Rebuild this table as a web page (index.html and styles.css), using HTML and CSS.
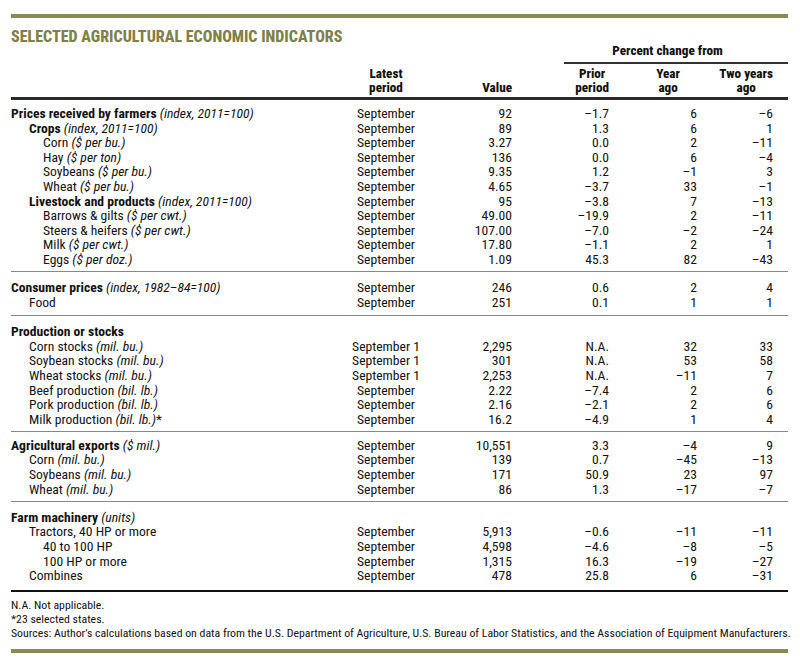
FILE: index.html
```html
<!DOCTYPE html>
<html>
<head>
<meta charset="utf-8">
<link rel="stylesheet" href="styles.css">
</head>
<body>
<div class="page">
  <div class="rule-olive"></div>
  <h1 class="title">SELECTED AGRICULTURAL ECONOMIC INDICATORS</h1>
  <table class="ind">
    <colgroup>
      <col class="w-label"><col class="w-period"><col class="w-value"><col class="w-prior"><col class="w-year"><col class="w-two">
    </colgroup>
    <thead>
      <tr class="hr1">
        <th colspan="3"></th>
        <th colspan="3" class="pcf">Percent change from</th>
      </tr>
      <tr class="hr2">
        <th></th>
        <th class="h-period">Latest<br>period</th>
        <th class="h-value">Value</th>
        <th class="h-prior"><span class="hb">Prior<br>period</span></th>
        <th class="h-year"><span class="hb">Year<br>ago</span></th>
        <th class="h-two"><span class="hb">Two years<br>ago</span></th>
      </tr>
    </thead>
    <tbody class="sec first">
      <tr><td class="l0"><b>Prices received by farmers</b> <i>(index, 2011=100)</i></td><td>September</td><td>92</td><td>–1.7</td><td>6</td><td>–6</td></tr>
      <tr><td class="l1"><b>Crops</b> <i>(index, 2011=100)</i></td><td>September</td><td>89</td><td>1.3</td><td>6</td><td>1</td></tr>
      <tr><td class="l2">Corn <i>($ per bu.)</i></td><td>September</td><td>3.27</td><td>0.0</td><td>2</td><td>–11</td></tr>
      <tr><td class="l2">Hay <i>($ per ton)</i></td><td>September</td><td>136</td><td>0.0</td><td>6</td><td>–4</td></tr>
      <tr><td class="l2">Soybeans <i>($ per bu.)</i></td><td>September</td><td>9.35</td><td>1.2</td><td>–1</td><td>3</td></tr>
      <tr><td class="l2">Wheat <i>($ per bu.)</i></td><td>September</td><td>4.65</td><td>–3.7</td><td>33</td><td>–1</td></tr>
      <tr><td class="l1"><b>Livestock and products</b> <i>(index, 2011=100)</i></td><td>September</td><td>95</td><td>–3.8</td><td>7</td><td>–13</td></tr>
      <tr><td class="l2">Barrows &amp; gilts <i>($ per cwt.)</i></td><td>September</td><td>49.00</td><td>–19.9</td><td>2</td><td>–11</td></tr>
      <tr><td class="l2">Steers &amp; heifers <i>($ per cwt.)</i></td><td>September</td><td>107.00</td><td>–7.0</td><td>–2</td><td>–24</td></tr>
      <tr><td class="l2">Milk <i>($ per cwt.)</i></td><td>September</td><td>17.80</td><td>–1.1</td><td>2</td><td>1</td></tr>
      <tr><td class="l2">Eggs <i>($ per doz.)</i></td><td>September</td><td>1.09</td><td>45.3</td><td>82</td><td>–43</td></tr>
    </tbody>
    <tbody class="sec cons">
      <tr><td class="l0"><b>Consumer prices</b> <i>(index, 1982–84=100)</i></td><td>September</td><td>246</td><td>0.6</td><td>2</td><td>4</td></tr>
      <tr><td class="l1">Food</td><td>September</td><td>251</td><td>0.1</td><td>1</td><td>1</td></tr>
    </tbody>
    <tbody class="sec">
      <tr><td class="l0"><b>Production or stocks</b></td><td></td><td></td><td></td><td></td><td></td></tr>
      <tr><td class="l1">Corn stocks <i>(mil. bu.)</i></td><td>September 1</td><td>2,295</td><td>N.A.</td><td>32</td><td>33</td></tr>
      <tr><td class="l1">Soybean stocks <i>(mil. bu.)</i></td><td>September 1</td><td>301</td><td>N.A.</td><td>53</td><td>58</td></tr>
      <tr><td class="l1">Wheat stocks <i>(mil. bu.)</i></td><td>September 1</td><td>2,253</td><td>N.A.</td><td>–11</td><td>7</td></tr>
      <tr><td class="l1">Beef production <i>(bil. lb.)</i></td><td>September</td><td>2.22</td><td>–7.4</td><td>2</td><td>6</td></tr>
      <tr><td class="l1">Pork production <i>(bil. lb.)</i></td><td>September</td><td>2.16</td><td>–2.1</td><td>2</td><td>6</td></tr>
      <tr><td class="l1">Milk production <i>(bil. lb.)</i>*</td><td>September</td><td>16.2</td><td>–4.9</td><td>1</td><td>4</td></tr>
    </tbody>
    <tbody class="sec exp">
      <tr><td class="l0"><b>Agricultural exports</b> <i>($ mil.)</i></td><td>September</td><td>10,551</td><td>3.3</td><td>–4</td><td>9</td></tr>
      <tr><td class="l1">Corn <i>(mil. bu.)</i></td><td>September</td><td>139</td><td>0.7</td><td>–45</td><td>–13</td></tr>
      <tr><td class="l1">Soybeans <i>(mil. bu.)</i></td><td>September</td><td>171</td><td>50.9</td><td>23</td><td>97</td></tr>
      <tr><td class="l1">Wheat <i>(mil. bu.)</i></td><td>September</td><td>86</td><td>1.3</td><td>–17</td><td>–7</td></tr>
    </tbody>
    <tbody class="sec last">
      <tr><td class="l0"><b>Farm machinery</b> <i>(units)</i></td><td></td><td></td><td></td><td></td><td></td></tr>
      <tr><td class="l1">Tractors, 40 HP or more</td><td>September</td><td>5,913</td><td>–0.6</td><td>–11</td><td>–11</td></tr>
      <tr><td class="l2">40 to 100 HP</td><td>September</td><td>4,598</td><td>–4.6</td><td>–8</td><td>–5</td></tr>
      <tr><td class="l2">100 HP or more</td><td>September</td><td>1,315</td><td>16.3</td><td>–19</td><td>–27</td></tr>
      <tr><td class="l1">Combines</td><td>September</td><td>478</td><td>25.8</td><td>6</td><td>–31</td></tr>
    </tbody>
  </table>
  <div class="notes">
    <p>N.A. Not applicable.</p>
    <p>*23 selected states.</p>
    <p>Sources: Author’s calculations based on data from the U.S. Department of Agriculture, U.S. Bureau of Labor Statistics, and the Association of Equipment Manufacturers.</p>
  </div>
  <div class="rule-olive"></div>
</div>
</body>
</html>
```

FILE: styles.css
```css
html, body {
  margin: 0;
  padding: 0;
  background: #fff;
}
body {
  font-family: Roboto, "Liberation Sans", sans-serif;
  font-stretch: 75%;
  color: #111;
}
.page {
  width: 777px;
  padding: 14px 0 0 11px;
}
.rule-olive {
  height: 4px;
  background: #8a8a54;
}
.title {
  margin: 11px 0 0 0;
  font-size: 16px;
  line-height: 16px;
  font-weight: 800;
  color: #7f7f48;
  letter-spacing: 0;
}
.ind {
  width: 777px;
  border-collapse: collapse;
  table-layout: fixed;
  font-size: 13.6px;
}
.w-label { width: 329px; }
.w-period { width: 92px; }
.w-value { width: 132px; }
.w-prior { width: 56px; }
.w-year { width: 80px; }
.w-two { width: 88px; }

.ind th {
  font-weight: 800;
  font-size: 13.2px;
  padding: 0;
  vertical-align: bottom;
}
.hr1 th {
  line-height: 12px;
  padding-bottom: 5px;
}
.hr1 .pcf {
  border-bottom: 2px solid #333;
  text-align: center;
  padding-right: 17px;
}
.hr2 th {
  line-height: 14px;
  padding-top: 3px;
  padding-bottom: 2px;
  border-bottom: 3px solid #2a2a2a;
}
.hb {
  display: inline-block;
  text-align: center;
}
.h-period { text-align: center; }
.h-value { text-align: right; padding-right: 52px !important; }
.h-prior { text-align: right; padding-right: 11px !important; }
.h-year { text-align: right; padding-right: 20px !important; }
.h-two { text-align: right; padding-right: 15px !important; }

.ind td {
  padding: 0;
  line-height: 14.6px;
  white-space: nowrap;
  text-align: right;
}
.ind td:nth-child(1) { text-align: left; }
.ind td:nth-child(2) { text-align: center; }
.ind td:nth-child(3) { padding-right: 52px; }
.ind td:nth-child(4) { padding-right: 11px; }
.ind td:nth-child(5) { padding-right: 3px; }
.ind td:nth-child(6) { padding-right: 15px; }

.ind b { font-weight: 700; }

.ind td.l1 { padding-left: 18px; }
.ind td.l2 { padding-left: 32px; }

.sec {
  border-bottom: 1px solid #888;
}
.sec tr:first-child td { padding-top: 8px; }
.sec tr:last-child td { padding-bottom: 4.5px; }
.sec.first tr:first-child td { padding-top: 6px; }
.sec.cons tr:last-child td { padding-bottom: 6px; }
.sec.exp tr:first-child td { padding-top: 6px; }
.sec.last {
  border-bottom: 2px solid #111;
}
.sec.last tr:last-child td { padding-bottom: 7px; }

.notes {
  padding-top: 6px;
  padding-bottom: 8px;
  font-size: 11.8px;
  line-height: 14.3px;
}
.notes p {
  margin: 0;
  white-space: nowrap;
}
```
